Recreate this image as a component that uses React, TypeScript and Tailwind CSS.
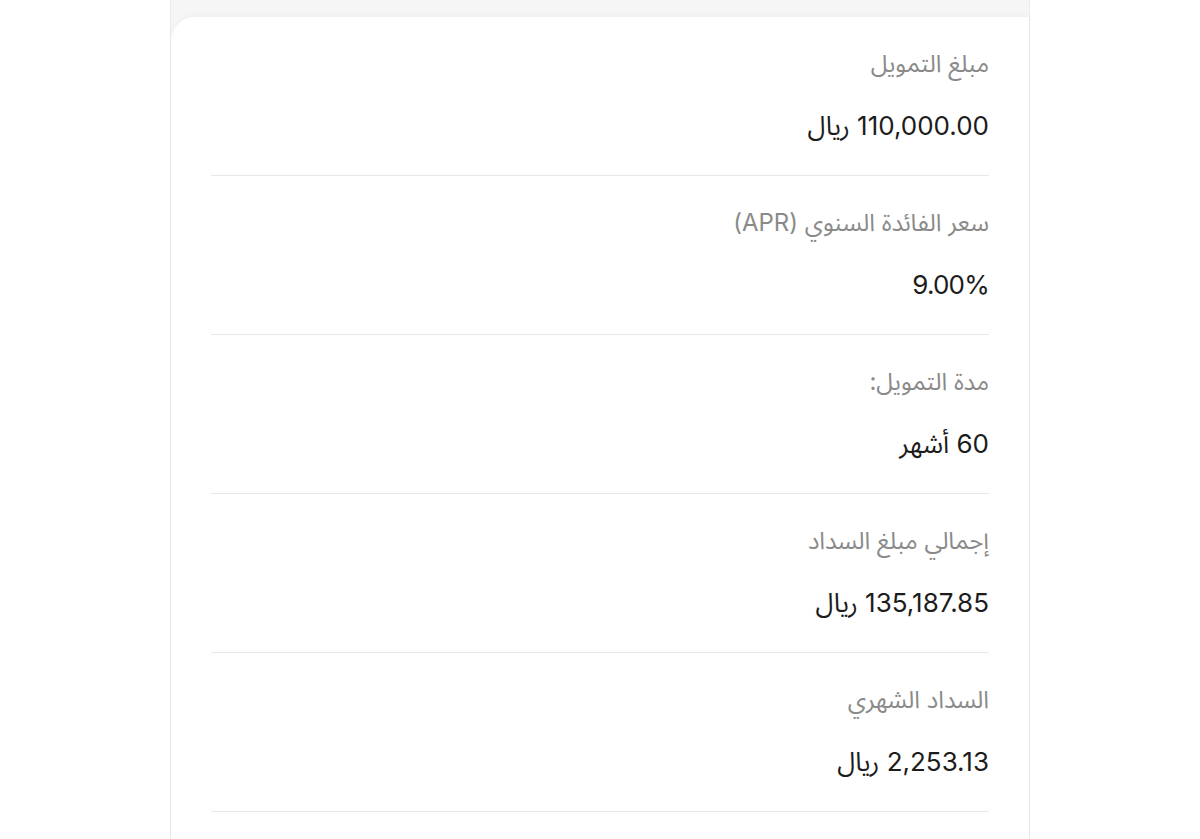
import React from "react";

const rows = [
  { label: "مبلغ التمويل", value: "110,000.00 ريال" },
  { label: "سعر الفائدة السنوي (APR)", value: "9.00%" },
  { label: "مدة التمويل:", value: "60 أشهر" },
  { label: "إجمالي مبلغ السداد", value: "135,187.85 ريال" },
  { label: "السداد الشهري", value: "2,253.13 ريال" },
];

export default function App() {
  return (
    <div
      dir="rtl"
      className="min-h-[839px] bg-white flex justify-center"
      style={{ fontFamily: 'Inter, "Noto Sans Arabic", "DejaVu Sans", sans-serif' }}
    >
      <div className="w-[860px] border-x border-[#ececec] bg-[#f6f6f6] pt-[17px]">
        <div className="bg-white rounded-tl-[24px] min-h-[822px] px-10 shadow-[0_-2px_6px_rgba(0,0,0,0.03)]">
          {rows.map((row, i) => (
            <div key={i} className="pt-[33px] pb-[33px] border-b border-[#e8e8e8]">
              <p className="text-[24px] leading-[28px] text-[#8a8a8a]">{row.label}</p>
              <p className="mt-8 text-[26px] leading-[32px] tracking-[-0.03em] text-[#1c1c1c]">{row.value}</p>
            </div>
          ))}
        </div>
      </div>
    </div>
  );
}
